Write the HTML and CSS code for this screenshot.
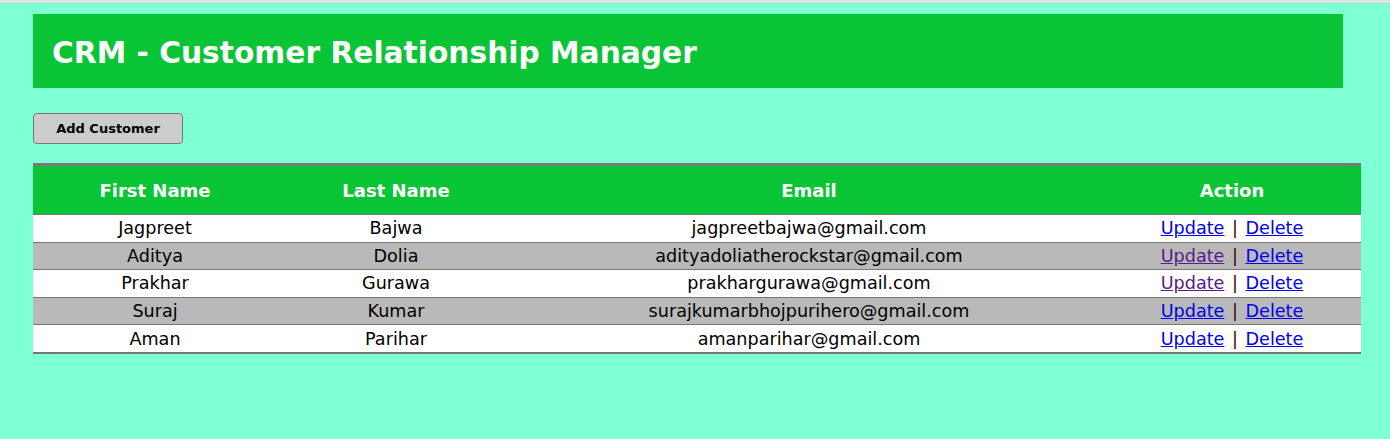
FILE: index.html
```html
<!DOCTYPE html>
<html>
<head>
<meta charset="utf-8">
<link rel="stylesheet" href="styles.css">
</head>
<body>
<div class="page">
  <div class="header"><h1>CRM - Customer Relationship Manager</h1></div>
  <button class="add-btn">Add Customer</button>
  <table class="list">
    <thead>
      <tr><th class="c1">First Name</th><th class="c2">Last Name</th><th class="c3">Email</th><th class="c4">Action</th></tr>
    </thead>
    <tbody>
      <tr><td>Jagpreet</td><td>Bajwa</td><td>jagpreetbajwa@gmail.com</td><td><a href="#u1">Update</a> <span class="sep">|</span> <a href="#d1">Delete</a></td></tr>
      <tr class="alt"><td>Aditya</td><td>Dolia</td><td>adityadoliatherockstar@gmail.com</td><td><a class="visited" href="#u2">Update</a> <span class="sep">|</span> <a href="#d2">Delete</a></td></tr>
      <tr><td>Prakhar</td><td>Gurawa</td><td>prakhargurawa@gmail.com</td><td><a class="visited" href="#u3">Update</a> <span class="sep">|</span> <a href="#d3">Delete</a></td></tr>
      <tr class="alt"><td>Suraj</td><td>Kumar</td><td>surajkumarbhojpurihero@gmail.com</td><td><a href="#u4">Update</a> <span class="sep">|</span> <a href="#d4">Delete</a></td></tr>
      <tr><td>Aman</td><td>Parihar</td><td>amanparihar@gmail.com</td><td><a href="#u5">Update</a> <span class="sep">|</span> <a href="#d5">Delete</a></td></tr>
    </tbody>
  </table>
</div>
</body>
</html>
```
FILE: styles.css
```css
html, body {
  margin: 0;
  padding: 0;
}
body {
  background: #7fffd4;
  border-top: 3px solid #e3e3e3;
  height: 436px;
}
.page {
  padding: 11px 29px 0 33px;
}
.header {
  background: #09c435;
  height: 74px;
  margin-right: 18px;
  display: flex;
  align-items: center;
  padding-left: 19px;
}
.header h1 {
  margin: 0;
  color: #fff;
  font-family: "DejaVu Sans", Verdana, sans-serif;
  font-weight: bold;
  font-size: 29.7px;
  padding-top: 2px;
}
.add-btn {
  display: block;
  margin-top: 25px;
  width: 150px;
  height: 31px;
  background: #cccccc;
  border: 1px solid #767676;
  border-radius: 4px;
  font-family: "DejaVu Sans", sans-serif;
  font-weight: bold;
  font-size: 13px;
  color: #000;
  padding: 0;
}
.list {
  margin-top: 19px;
  width: 100%;
  border-collapse: collapse;
  font-family: "DejaVu Sans", sans-serif;
  font-size: 17.6px;
  color: #000;
  border-top: 3px solid #777;
  border-bottom: 2px solid #777;
}
.list th {
  background: #09c435;
  color: #fff;
  font-weight: bold;
  font-size: 18px;
  height: 48px;
  padding: 0;
  text-align: center;
  border-bottom: 1px solid #777;
}
.c1 { width: 244px; }
.c2 { width: 238px; }
.c3 { width: 588px; }
.c4 { width: 258px; }
.list td {
  background: #fff;
  text-align: center;
  padding: 0;
  height: 26.6px;
  line-height: 26px;
  border-top: 1px solid #777;
}
.list tr.alt td {
  background: #b9b9b9;
}
.list tbody tr:first-child td {
  border-top: none;
}
.list a {
  color: #0000ee;
  text-decoration: underline;
}
.list a.visited {
  color: #551a8b;
}
.sep {
  color: #3a0000;
  margin: 0 2px;
}
```
